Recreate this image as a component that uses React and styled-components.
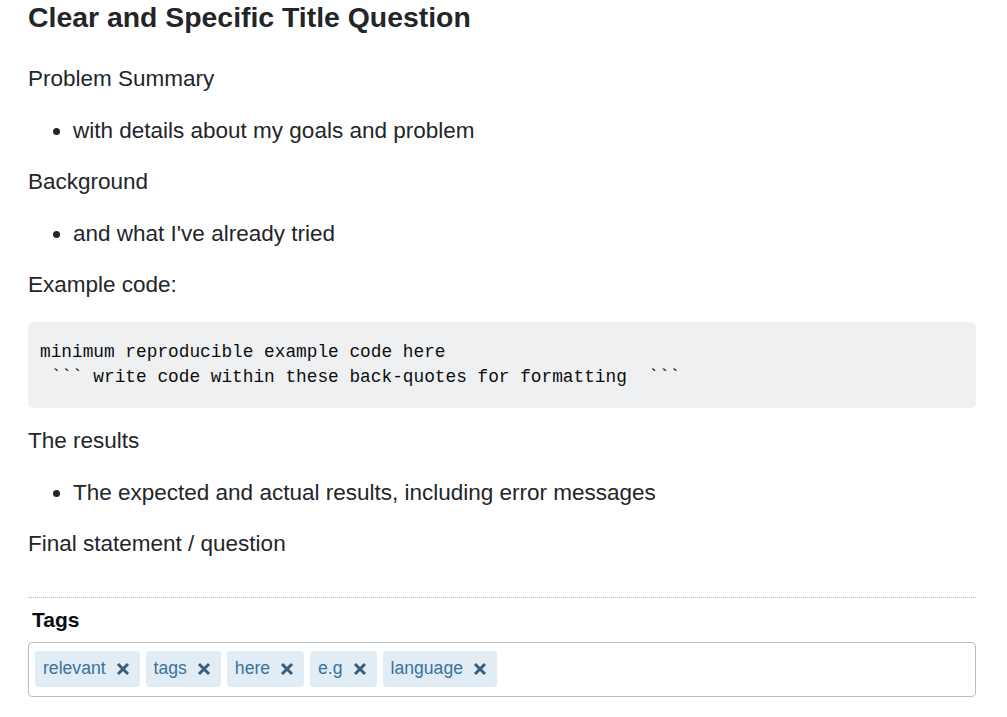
import React from 'react';
import styled, { createGlobalStyle } from 'styled-components';

const GlobalStyle = createGlobalStyle`
  body {
    margin: 0;
    background: #fff;
    font-family: "Liberation Sans", Arial, sans-serif;
    color: #232629;
  }
`;

const Page = styled.div`
  width: 948px;
  padding: 0 0 0 28px;
  box-sizing: content-box;
`;

const Title = styled.h1`
  margin: 0 0 29px;
  font-size: 28.4px;
  line-height: 35px;
  font-weight: bold;
  color: #232629;
`;

const Para = styled.p`
  margin: 0 0 22.5px;
  font-size: 22.5px;
  line-height: 29px;
`;

const List = styled.ul`
  margin: 0 0 22.5px;
  padding-left: 45px;
  font-size: 22.5px;
  line-height: 29px;
  list-style: disc;
`;

const CodeBlock = styled.pre`
  margin: 0 0 18.5px;
  padding: 18px 12px;
  background: #eff0f1;
  border-radius: 5px;
  font-family: "Liberation Mono", "DejaVu Sans Mono", monospace;
  font-size: 17.8px;
  line-height: 25px;
  color: #0c0d0e;
  white-space: pre;
`;

const Divider = styled.div`
  margin-top: 38.5px;
  border-top: 1px dotted #b4b8bc;
`;

const TagsLabel = styled.div`
  margin: 9px 0 9px 4px;
  font-size: 21px;
  line-height: 26px;
  font-weight: bold;
  color: #0c0d0e;
`;

const TagBox = styled.div`
  display: flex;
  flex-wrap: wrap;
  gap: 6px;
  padding: 8px 6px 9px;
  border: 1px solid #babfc4;
  border-radius: 4px;
`;

const Tag = styled.span`
  display: inline-flex;
  align-items: center;
  gap: 10px;
  height: 36px;
  padding: 0 10px 0 8px;
  background: #e1ecf4;
  border-radius: 4px;
  color: #39739d;
  font-size: 17.6px;
`;

const RemoveIcon = () => (
  <svg width="14" height="14" viewBox="0 0 14 14">
    <path d="M2 2 L12 12 M12 2 L2 12" stroke="#3b5e7b" strokeWidth="3" />
  </svg>
);

const tags = ['relevant', 'tags', 'here', 'e.g', 'language'];

export default function App() {
  return (
    <Page>
      <GlobalStyle />
      <Title>Clear and Specific Title Question</Title>
      <Para>Problem Summary</Para>
      <List>
        <li>with details about my goals and problem</li>
      </List>
      <Para>Background</Para>
      <List>
        <li>and what I've already tried</li>
      </List>
      <Para>Example code:</Para>
      <CodeBlock>{'minimum reproducible example code here\n ``` write code within these back-quotes for formatting  ```'}</CodeBlock>
      <Para>The results</Para>
      <List>
        <li>The expected and actual results, including error messages</li>
      </List>
      <Para>Final statement / question</Para>
      <Divider />
      <TagsLabel>Tags</TagsLabel>
      <TagBox>
        {tags.map((t) => (
          <Tag key={t}>
            {t}
            <RemoveIcon />
          </Tag>
        ))}
      </TagBox>
    </Page>
  );
}
